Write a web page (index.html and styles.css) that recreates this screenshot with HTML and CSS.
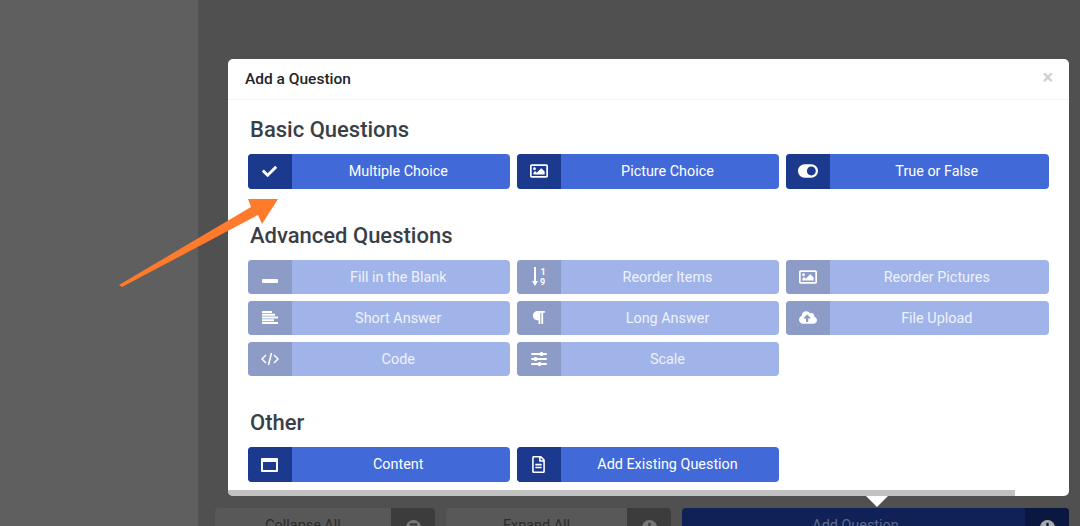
FILE: index.html
```html
<!DOCTYPE html>
<html lang="en">
<head>
    <meta charset="UTF-8">
    <title>Add a Question</title>
    <link rel="stylesheet" href="styles.css">
</head>
<body>
    <div class="sidebar"></div>
    <div class="main">
        <div class="footer">
            <div class="foot-btn foot-collapse"><span class="foot-label">Collapse All</span><span class="foot-icon"><svg viewBox="0 0 16 16"><circle cx="8" cy="8" r="8"/><rect class="glyph" x="4" y="3.500" width="8" height="2.500"/></svg></span></div>
            <div class="foot-btn foot-expand"><span class="foot-label">Expand All</span><span class="foot-icon"><svg viewBox="0 0 16 16"><circle cx="8" cy="8" r="8"/><rect class="glyph" x="6.750" y="3" width="2.500" height="10"/></svg></span></div>
            <div class="foot-btn foot-add"><span class="foot-label">Add Question</span><span class="foot-icon"><svg viewBox="0 0 16 16"><circle cx="8" cy="8" r="8"/><rect class="glyph" x="6.750" y="3" width="2.500" height="10"/></svg></span></div>
        </div>
    </div>

    <div class="modal">
        <div class="modal-header">
            <span class="modal-title">Add a Question</span>
            <span class="modal-close">&times;</span>
        </div>
        <div class="modal-body">
            <h2>Basic Questions</h2>
            <div class="btn-grid">
                <div class="q-btn">
                    <span class="q-icon"><svg class="i-check" viewBox="0 0 512 512"><path d="M173.898 439.404l-166.4-166.4c-9.997-9.997-9.997-26.206 0-36.204l36.203-36.204c9.997-9.998 26.207-9.998 36.204 0L192 312.69 432.095 72.596c9.997-9.997 26.207-9.997 36.204 0l36.203 36.204c9.997 9.997 9.997 26.206 0 36.204l-294.4 294.401c-9.998 9.997-26.207 9.997-36.204-.001z"/></svg></span>
                    <span class="q-label">Multiple Choice</span>
                </div>
                <div class="q-btn">
                    <span class="q-icon"><svg class="i-image" viewBox="0 0 512 512"><path d="M464 64H48C21.49 64 0 85.49 0 112v288c0 26.51 21.49 48 48 48h416c26.51 0 48-21.49 48-48V112c0-26.51-21.49-48-48-48zm-6 336H54a6 6 0 0 1-6-6V118a6 6 0 0 1 6-6h404a6 6 0 0 1 6 6v276a6 6 0 0 1-6 6zM128 152c-22.091 0-40 17.909-40 40s17.909 40 40 40 40-17.909 40-40-17.909-40-40-40zM96 352h320v-80l-87.515-87.515c-4.686-4.686-12.284-4.686-16.971 0L192 304l-39.515-39.515c-4.686-4.686-12.284-4.686-16.971 0L96 304v48z"/></svg></span>
                    <span class="q-label">Picture Choice</span>
                </div>
                <div class="q-btn">
                    <span class="q-icon"><svg class="i-toggle" viewBox="0 0 576 512"><path d="M384 64H192C86 64 0 150 0 256s86 192 192 192h192c106 0 192-86 192-192S490 64 384 64zm0 320c-70.800 0-128-57.300-128-128 0-70.800 57.300-128 128-128 70.800 0 128 57.300 128 128 0 70.800-57.300 128-128 128z"/></svg></span>
                    <span class="q-label">True or False</span>
                </div>
            </div>

            <h2>Advanced Questions</h2>
            <div class="btn-grid">
                <div class="q-btn disabled">
                    <span class="q-icon"><svg class="i-minus" viewBox="0 0 16 16"><rect x="0" y="10" width="16" height="4" rx="1"/></svg></span>
                    <span class="q-label">Fill in the Blank</span>
                </div>
                <div class="q-btn disabled">
                    <span class="q-icon"><svg class="i-sort" viewBox="0 0 14 19"><path d="M2 0h2v14h2l-3 5-3-5h2z"/><text x="8.500" y="7.500" class="sort-num">1</text><text x="8" y="17.500" class="sort-num">9</text></svg></span>
                    <span class="q-label">Reorder Items</span>
                </div>
                <div class="q-btn disabled">
                    <span class="q-icon"><svg class="i-image" viewBox="0 0 512 512"><path d="M464 64H48C21.49 64 0 85.49 0 112v288c0 26.51 21.49 48 48 48h416c26.51 0 48-21.49 48-48V112c0-26.51-21.49-48-48-48zm-6 336H54a6 6 0 0 1-6-6V118a6 6 0 0 1 6-6h404a6 6 0 0 1 6 6v276a6 6 0 0 1-6 6zM128 152c-22.091 0-40 17.909-40 40s17.909 40 40 40 40-17.909 40-40-17.909-40-40-40zM96 352h320v-80l-87.515-87.515c-4.686-4.686-12.284-4.686-16.971 0L192 304l-39.515-39.515c-4.686-4.686-12.284-4.686-16.971 0L96 304v48z"/></svg></span>
                    <span class="q-label">Reorder Pictures</span>
                </div>
                <div class="q-btn disabled">
                    <span class="q-icon"><svg class="i-align" viewBox="0 0 16 13"><rect y="0" width="10" height="2"/><rect y="2.750" width="13" height="2"/><rect y="5.500" width="16" height="2"/><rect y="8.250" width="12" height="2"/><rect y="11" width="16" height="2"/></svg></span>
                    <span class="q-label">Short Answer</span>
                </div>
                <div class="q-btn disabled">
                    <span class="q-icon"><svg class="i-para" viewBox="0 0 448 512"><path d="M448 48v32a16 16 0 0 1-16 16h-48v368a16 16 0 0 1-16 16h-32a16 16 0 0 1-16-16V96h-32v368a16 16 0 0 1-16 16h-32a16 16 0 0 1-16-16V352h-32a160 160 0 0 1 0-320h240a16 16 0 0 1 16 16z"/></svg></span>
                    <span class="q-label">Long Answer</span>
                </div>
                <div class="q-btn disabled">
                    <span class="q-icon"><svg class="i-cloud" viewBox="0 0 640 512"><path d="M537.600 226.600c4.100-10.700 6.400-22.400 6.400-34.600 0-53-43-96-96-96-19.700 0-38.100 6-53.300 16.200C367 64.200 315.300 32 256 32c-88.400 0-160 71.600-160 160 0 2.700.1 5.400.2 8.100C40.200 219.800 0 273.200 0 336c0 79.500 64.500 144 144 144h368c70.700 0 128-57.300 128-128 0-61.900-44-113.600-102.400-125.400zM393.400 288H328v112c0 8.800-7.200 16-16 16h-48c-8.800 0-16-7.200-16-16V288h-65.400c-14.300 0-21.400-17.200-11.300-27.300l105.400-105.400c6.200-6.200 16.400-6.200 22.600 0l105.400 105.400c10.100 10.100 2.900 27.300-11.300 27.300z"/></svg></span>
                    <span class="q-label">File Upload</span>
                </div>
                <div class="q-btn disabled">
                    <span class="q-icon"><svg class="i-code" viewBox="0 0 18 14"><path d="M5 3L1 7l4 4M13 3l4 4-4 4M10.500 1l-3 12"/></svg></span>
                    <span class="q-label">Code</span>
                </div>
                <div class="q-btn disabled">
                    <span class="q-icon"><svg class="i-sliders" viewBox="0 0 16 14"><rect y="1" width="16" height="2" rx="1"/><rect y="6" width="16" height="2" rx="1"/><rect y="11" width="16" height="2" rx="1"/><rect x="9" y="0" width="3" height="4" rx="1"/><rect x="3" y="5" width="3" height="4" rx="1"/><rect x="7" y="10" width="3" height="4" rx="1"/></svg></span>
                    <span class="q-label">Scale</span>
                </div>
            </div>

            <h2>Other</h2>
            <div class="btn-grid">
                <div class="q-btn">
                    <span class="q-icon"><svg class="i-window" viewBox="0 0 17 15"><path d="M0 2a1 1 0 0 1 1-1h15a1 1 0 0 1 1 1v12a1 1 0 0 1-1 1H1a1 1 0 0 1-1-1zm2 3v8h13V5z"/></svg></span>
                    <span class="q-label">Content</span>
                </div>
                <div class="q-btn">
                    <span class="q-icon"><svg class="i-file" viewBox="0 0 384 512"><path d="M288 248v28c0 6.600-5.400 12-12 12H108c-6.600 0-12-5.400-12-12v-28c0-6.600 5.400-12 12-12h168c6.600 0 12 5.400 12 12zm-12 72H108c-6.600 0-12 5.400-12 12v28c0 6.600 5.400 12 12 12h168c6.600 0 12-5.400 12-12v-28c0-6.600-5.400-12-12-12zm108-188.100V464c0 26.500-21.500 48-48 48H48c-26.500 0-48-21.500-48-48V48C0 21.500 21.500 0 48 0h204.100C264.800 0 277 5.100 286 14.100L369.900 98c9 8.900 14.100 21.200 14.100 33.900zm-128-80V128h76.100L256 51.900zM336 464V176H232c-13.300 0-24-10.700-24-24V48H48v416h288z"/></svg></span>
                    <span class="q-label">Add Existing Question</span>
                </div>
            </div>
        </div>
        <div class="scrollbar"><div class="scroll-thumb"></div></div>
    </div>
    <div class="caret"></div>

    <svg class="arrow" viewBox="0 0 1080 526"><polygon points="119,285 251,207 248,199 278,199 262,224 258,215 122,287"/></svg>
</body>
</html>
```

FILE: styles.css
```css
* {
    box-sizing: border-box;
}
body {
    margin: 0;
    height: 526px;
    overflow: hidden;
    display: flex;
    font-family: Roboto, "Liberation Sans", sans-serif;
    background: #505050;
}
.sidebar {
    width: 198px;
    background: #5f5f5f;
}
.main {
    flex: 1;
    padding: 508px 11px 0 17px;
}
.footer {
    display: flex;
    gap: 11px;
}
.foot-btn {
    display: flex;
    height: 35px;
    border-radius: 4px;
    overflow: hidden;
    font-size: 14.4px;
    color: #2b2b2b;
    background: #585858;
}
.foot-collapse {
    width: 220px;
}
.foot-expand {
    width: 225px;
}
.foot-add {
    width: 387px;
    background: #0f2157;
    color: #5d6a8c;
}
.foot-label {
    flex: 1;
    text-align: center;
    line-height: 35px;
}
.foot-add .foot-label {
    padding-left: 4px;
}
.foot-icon {
    width: 44px;
    display: flex;
    justify-content: center;
    padding-top: 12px;
    background: #3c3c3c;
}
.foot-add .foot-icon {
    background: #0a1740;
}
.foot-icon svg {
    width: 15px;
    height: 15px;
    fill: #777;
}
.foot-icon .glyph {
    fill: #3c3c3c;
}
.foot-add .foot-icon svg {
    fill: #aaa;
}
.foot-add .foot-icon .glyph {
    fill: #0a1740;
}
.modal {
    position: absolute;
    left: 228px;
    top: 59px;
    width: 841px;
    height: 437px;
    background: #fff;
    border-radius: 5px;
    overflow: hidden;
    display: flex;
    flex-direction: column;
}
.modal-header {
    height: 41px;
    flex: none;
    display: flex;
    align-items: center;
    justify-content: space-between;
    padding: 0 16px 0 17px;
    border-bottom: 1px solid #f4f4f4;
}
.modal-title {
    font-size: 15.5px;
    font-weight: 500;
    color: #212529;
}
.modal-close {
    font-size: 20px;
    line-height: 20px;
    margin-bottom: 4px;
    font-weight: 700;
    color: #cfcfcf;
}
.modal-body {
    flex: 1;
    padding: 15px 20px 0 19.5px;
}
h2 {
    margin: 32px 0 9px 2.5px;
    font-size: 22px;
    line-height: 30px;
    font-weight: 500;
    color: #3a3f47;
}
h2:first-child {
    margin-top: 0;
}
.btn-grid {
    display: grid;
    grid-template-columns: repeat(3, 262.5px);
    gap: 6.5px 6.75px;
}
.q-btn {
    display: flex;
    height: 34.5px;
    background: #4169d8;
    border-radius: 4px;
    overflow: hidden;
    color: #fff;
    font-size: 14.4px;
}
.q-btn.disabled {
    background: #a0b4e9;
    color: #eef2fb;
}
.q-icon {
    width: 44px;
    flex: none;
    display: flex;
    align-items: center;
    justify-content: center;
    background: #1b3a8e;
}
.disabled .q-icon {
    background: #8d9cc7;
}
.q-icon svg {
    display: block;
    fill: #fff;
}
.q-label {
    flex: 1;
    text-align: center;
    line-height: 34.5px;
    padding: 1px 5px 0 0;
}
.i-check { width: 15px; height: 15px; }
.i-image { width: 18px; height: 18px; }
.i-toggle { width: 20px; height: 18px; }
.i-minus { width: 16px; height: 16px; }
.i-sort { width: 14px; height: 19px; }
.i-align { width: 16px; height: 13px; }
.i-para { width: 13px; height: 15px; }
.i-cloud { width: 18px; height: 15px; }
.i-code { width: 18px; height: 14px; fill: none !important; stroke: #fff; stroke-width: 1.5; }
.i-sliders { width: 16px; height: 14px; }
.i-window { width: 17px; height: 15px; }
.i-file { width: 13px; height: 17px; }
.sort-num {
    font-family: Roboto, sans-serif;
    font-size: 9px;
    font-weight: 700;
}
.scrollbar {
    height: 6px;
    flex: none;
}
.scroll-thumb {
    width: 787px;
    height: 6px;
    background: #c1c1c1;
}
.caret {
    position: absolute;
    left: 866px;
    top: 496px;
    border-left: 11px solid transparent;
    border-right: 11px solid transparent;
    border-top: 11px solid #fff;
}
.arrow {
    position: absolute;
    left: 0;
    top: 0;
    width: 1080px;
    height: 526px;
}
.arrow polygon {
    fill: #ff7a2b;
}
```
